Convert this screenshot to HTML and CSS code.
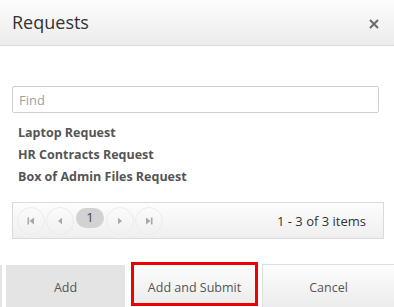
FILE: index.html
```html
<!DOCTYPE html>
<html>
  <head>
    <meta charset="UTF-8" />
    <title>Requests</title>
    <link rel="stylesheet" href="styles.css">
  </head>
  <body>
    <div class="dialog">
      <div class="dialog-header">
        <span class="dialog-title">Requests</span>
        <span class="dialog-close">
          <svg width="10" height="10" viewBox="0 0 10 10"><path d="M1 1 L9 9 M9 1 L1 9" stroke="#6a6a6a" stroke-width="2"/></svg>
        </span>
      </div>
      <div class="dialog-content">
        <input class="find" type="text" placeholder="Find" />
        <ul class="request-list">
          <li>Laptop Request</li>
          <li>HR Contracts Request</li>
          <li>Box of Admin Files Request</li>
        </ul>
        <div class="pager">
          <span class="pager-nav">
            <svg width="8" height="8" viewBox="0 0 8 8"><rect x="0.5" y="0.5" width="1.6" height="7" fill="#a8a8a8"/><path d="M7 0.5 L2.5 4 L7 7.5 Z" fill="#a8a8a8"/></svg>
          </span>
          <span class="pager-nav">
            <svg width="8" height="8" viewBox="0 0 8 8"><path d="M6 0.8 L2 4 L6 7.2 Z" fill="#a8a8a8"/></svg>
          </span>
          <span class="pager-page">1</span>
          <span class="pager-nav">
            <svg width="8" height="8" viewBox="0 0 8 8"><path d="M2 0.8 L6 4 L2 7.2 Z" fill="#a8a8a8"/></svg>
          </span>
          <span class="pager-nav">
            <svg width="8" height="8" viewBox="0 0 8 8"><path d="M1 0.5 L5.5 4 L1 7.5 Z" fill="#a8a8a8"/><rect x="5.9" y="0.5" width="1.6" height="7" fill="#a8a8a8"/></svg>
          </span>
          <span class="pager-info">1 - 3 of 3 items</span>
        </div>
      </div>
      <div class="dialog-buttons">
        <span class="btn-edge"></span>
        <button class="btn btn-add">Add</button>
        <div class="highlight">
          <button class="btn btn-light">Add and Submit</button>
        </div>
        <button class="btn btn-light btn-cancel">Cancel</button>
      </div>
    </div>
  </body>
</html>
```

FILE: styles.css
```css
body {
  margin: 0;
  background-color: #fff;
  font-family: "Open Sans", "Noto Sans", sans-serif;
  color: #333;
  overflow: hidden;
}
.dialog {
  width: 394px;
  height: 307px;
  overflow: hidden;
}
.dialog-header {
  height: 45px;
  display: flex;
  align-items: center;
  justify-content: space-between;
  padding: 0 15px 0 12px;
  background: linear-gradient(#fcfcfc, #ececec);
  border-bottom: 1px solid #dcdcdc;
}
.dialog-title {
  font-size: 18px;
  color: #333;
  margin-top: -2px;
}
.dialog-close {
  display: flex;
  margin-top: 2px;
}
.dialog-content {
  padding: 40px 10px 0 12px;
}
.find {
  display: block;
  box-sizing: border-box;
  width: 367px;
  height: 27px;
  margin: 0;
  padding: 0 6px;
  border: 1px solid #cfcfcf;
  border-radius: 2px;
  font-family: inherit;
  font-size: 13px;
  color: #333;
}
.find::placeholder {
  color: #a0a0a0;
}
.request-list {
  list-style: none;
  margin: 9px 0 0 0;
  padding: 0 0 0 6px;
}
.request-list li {
  height: 22px;
  line-height: 22px;
  font-size: 12.5px;
  font-weight: bold;
  color: #555;
}
.pager {
  box-sizing: border-box;
  width: 372px;
  height: 37px;
  margin-top: 14px;
  padding: 0 17px 0 4px;
  display: flex;
  align-items: center;
  gap: 1px;
  border: 1px solid #dadada;
  background: linear-gradient(#fdfdfd, #efefef);
}
.pager-nav {
  width: 28px;
  height: 28px;
  box-sizing: border-box;
  border: 1px solid #ececec;
  border-radius: 50%;
  display: flex;
  align-items: center;
  justify-content: center;
}
.pager-page {
  width: 28px;
  height: 20px;
  margin: -6px 1px 0 1px;
  border-radius: 10px;
  background-color: #d2d2d2;
  color: #444;
  font-size: 13px;
  line-height: 19px;
  text-align: center;
}
.pager-info {
  margin-left: auto;
  font-size: 13px;
  color: #333;
}
.dialog-buttons {
  margin-top: 23px;
  height: 45px;
  display: flex;
  align-items: flex-start;
}
.btn-edge {
  width: 2px;
  height: 42px;
  margin-top: 3px;
  background-color: #e4e4e4;
}
.btn {
  font-family: inherit;
  font-size: 12.5px;
  color: #555;
  border: none;
  margin: 0;
  padding: 0;
}
.btn-add {
  width: 119px;
  height: 42px;
  margin: 3px 0 0 4px;
  background-color: #e4e4e4;
  padding-top: 3px;
}
.highlight {
  box-sizing: border-box;
  width: 127px;
  height: 44px;
  margin-left: 6px;
  border: 3px solid #f00000;
  display: flex;
}
.btn-light {
  background: linear-gradient(#fdfdfd, #ececec);
}
.highlight .btn {
  flex: 1;
  padding-top: 6px;
}
.btn-cancel {
  width: 132px;
  height: 43px;
  margin: 2px 0 0 4px;
  border-top: 1px solid #dedede;
  border-left: 1px solid #dedede;
  padding-top: 3px;
}
```
